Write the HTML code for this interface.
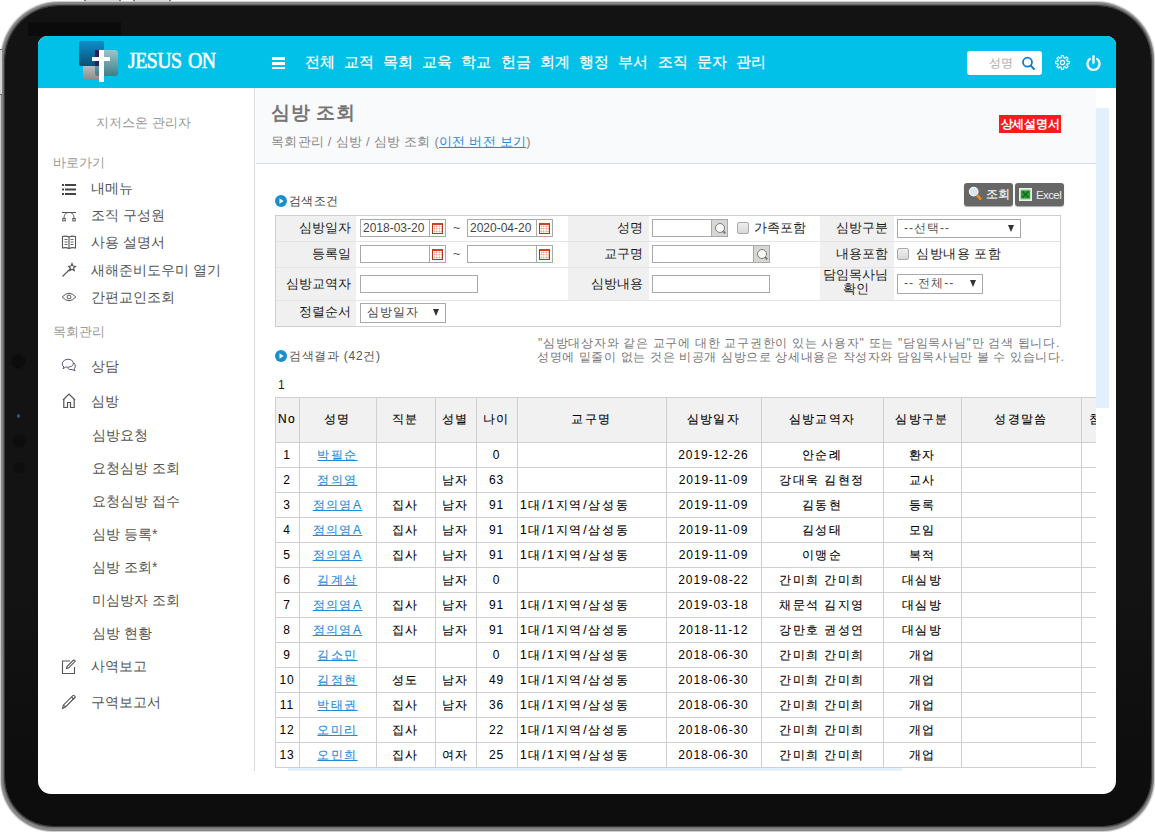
<!DOCTYPE html>
<html><head><meta charset="utf-8">
<style>
*{box-sizing:border-box;margin:0;padding:0}
html,body{width:1155px;height:832px;overflow:hidden;background:#fff;font-family:"Liberation Sans",sans-serif;}
.a{position:absolute;white-space:nowrap}
#frame{position:absolute;left:1px;top:1.5px;width:1153px;height:829px;border-radius:58px 58px 52px 52px;background:#8a8a8a;box-shadow:0 0 1px 0.5px #c8c8c8}
#frame:before{content:"";position:absolute;left:3.5px;top:4px;right:3.5px;bottom:4.5px;border-radius:54px 54px 48px 48px;background:linear-gradient(#131313 0,#131313 70%,#0c0c0c 100%);box-shadow:0 0 2px 1px #1a1a1a}
.btn-top{position:absolute;top:0;height:4px;background:#ddd;border-left:2px solid #777;border-right:2px solid #777}
#sidebtn{position:absolute;left:0;top:49px;width:2px;height:46px;background:#d4d4d4;border-top:1px solid #666;border-bottom:1px solid #666}
#screen{position:absolute;left:38px;top:36px;width:1078px;height:758px;border-radius:9px 9px 13px 13px;background:#fff;overflow:hidden}
#hdr{position:absolute;left:0;top:0;width:1079px;height:52px;background:#02c1e9}
.nav{position:absolute;top:16px;font-size:15px;color:#fff;line-height:20px;-webkit-text-stroke:0.25px #fff}
.sb{position:absolute;font-size:14px;color:#555;line-height:18px;white-space:nowrap}
.sbg{position:absolute;font-size:13px;color:#999;line-height:16px;white-space:nowrap}
.ico{position:absolute}

.lbl{background:#f0f0f0}
.ft{position:absolute;font-size:12.5px;color:#1a1a1a;line-height:16px;white-space:nowrap;text-align:right}
.inp{position:absolute;border:1px solid #a9a9a9;background:#fff}
.inp span{position:absolute;left:2px;top:0px;font-size:12px;line-height:16px;color:#444;white-space:nowrap}
.cal{position:absolute;width:17px;height:18px;border:1px solid #a9a9a9;background:#fff}
.cal:after{content:"";position:absolute;left:2px;top:3px;width:11px;height:11px;box-sizing:border-box;border:1px solid #a83a16;border-top:2px solid #c8471a;background:radial-gradient(circle,#f07040 0.7px,transparent 0.9px) 0 0/2.5px 2.5px #fff}
.srch{position:absolute;width:17px;height:18px;border:1px solid #a9a9a9;background:#d8d8d8}
.srch{background:#d8d6d2}.srch:after{content:"";position:absolute;left:3px;top:3px;width:8px;height:8px;border:1px solid #7a7a7a;border-radius:50%;background:#f8f8f8}.srch:before{content:"";position:absolute;left:10px;top:11px;width:4px;height:1.5px;background:#777;transform:rotate(45deg)}
.chk{position:absolute;width:12px;height:12px;border:1px solid #aaa;border-radius:2px;background:linear-gradient(#eee,#d8d8d8)}
.tri{position:absolute;top:5px;width:0;height:0;border-left:3px solid transparent;border-right:3px solid transparent;border-top:7px solid #333}
/* TCSS */
.hl{left:0;width:900px;height:1px;background:#cfcfcf}
.vl{top:0;width:1px;height:400px;background:#cfcfcf}
.th{height:45px;line-height:45px;text-align:center;font-size:12px;color:#000;letter-spacing:1.4px;-webkit-text-stroke:0.12px #000}
.td{height:25px;line-height:25px;text-align:center;font-size:12px;color:#000;letter-spacing:1.4px;white-space:nowrap;-webkit-text-stroke:0.12px #000}
.num{letter-spacing:0.9px;-webkit-text-stroke:0}
.lk{color:#1f8bdc;-webkit-text-stroke:0.12px #1f8bdc}
/* TCSSEND */
</style></head>
<body>
<div class="btn-top" style="left:84px;width:37px"></div>
<div class="btn-top" style="left:133px;width:38px"></div>
<div id="frame"></div>
<div id="sidebtn"></div>
<div class="a" style="left:28px;top:22px;width:93px;height:14px;background:#0b0b0b"></div>
<div class="a" style="left:12px;top:355px;width:13px;height:13px;border-radius:50%;background:#0c0c0c;box-shadow:0 0 2px #0c0c0c"></div>
<div class="a" style="left:17px;top:414px;width:3px;height:4px;border-radius:50%;background:#3a5570"></div>
<div class="a" style="left:12.5px;top:435px;width:12px;height:12px;border-radius:50%;background:#0d0d0d;box-shadow:0 0 2px #0d0d0d"></div>
<div class="a" style="left:13.5px;top:463px;width:10px;height:10px;border-radius:50%;background:#0e0e0e;box-shadow:0 0 2px #0e0e0e"></div>
<div id="screen">
  <div id="hdr">
    <!-- logo -->
    <div class="a" style="left:41px;top:5px;width:25px;height:25px;background:linear-gradient(#0f8ec9,#0a4f78);border-radius:2px"></div>
    <div class="a" style="left:45px;top:30px;width:16px;height:14px;background:linear-gradient(#bbb,#8a8a8a)"></div>
    <div class="a" style="left:57px;top:14px;width:23px;height:26px;background:linear-gradient(#9cc6c8,#3f7d86);border-radius:3px"></div>
    <div class="a" style="left:57px;top:14px;width:9px;height:16px;background:#2a1f5c"></div>
    <div class="a" style="left:61px;top:14px;width:5px;height:32px;background:#fff"></div>
    <div class="a" style="left:54px;top:21px;width:18px;height:4px;background:#fff"></div>
    <div class="a" style="left:90px;top:12px;font-family:'Liberation Serif',serif;font-size:23px;color:#fff;letter-spacing:-0.6px;word-spacing:2.5px;-webkit-text-stroke:0.6px #fff;line-height:26px;transform:scaleX(0.86);transform-origin:0 0">JESUS ON</div>
    <!-- hamburger -->
    <div class="a" style="left:234px;top:21px;width:13px;height:2.5px;background:#fff"></div>
    <div class="a" style="left:234px;top:26px;width:13px;height:2.5px;background:#fff"></div>
    <div class="a" style="left:234px;top:30.5px;width:13px;height:2.5px;background:#fff"></div>
    <span class="nav" style="left:267px">전체</span>
    <span class="nav" style="left:306px">교적</span>
    <span class="nav" style="left:345px">목회</span>
    <span class="nav" style="left:384px">교육</span>
    <span class="nav" style="left:423px">학교</span>
    <span class="nav" style="left:463px">헌금</span>
    <span class="nav" style="left:502px">회계</span>
    <span class="nav" style="left:541px">행정</span>
    <span class="nav" style="left:580px">부서</span>
    <span class="nav" style="left:620px">조직</span>
    <span class="nav" style="left:659px">문자</span>
    <span class="nav" style="left:698px">관리</span>
    <!-- search -->
    <div class="a" style="left:929px;top:15px;width:75px;height:24px;background:#fff;border-radius:3px"></div>
    <span class="a" style="left:951px;top:19px;font-size:12px;color:#aaa;line-height:16px">성명</span>
    <svg class="a" style="left:983px;top:20px" width="15" height="15" viewBox="0 0 15 15"><circle cx="6.5" cy="6.2" r="4.5" fill="none" stroke="#0f7bd6" stroke-width="1.8"/><path d="M9.8 9.6 L13 13" stroke="#0f7bd6" stroke-width="2" stroke-linecap="round"/></svg>
    <!-- gear -->
    <svg class="a" style="left:1016px;top:18px" width="17" height="17" viewBox="0 0 17 17"><g fill="none" stroke="#fff" stroke-width="1.15" stroke-linejoin="round"><path d="M7.31 3.75 L7.42 1.68 L9.58 1.68 L9.69 3.75 L11.02 4.30 L12.56 2.92 L14.08 4.44 L12.70 5.98 L13.25 7.31 L15.32 7.42 L15.32 9.58 L13.25 9.69 L12.70 11.02 L14.08 12.56 L12.56 14.08 L11.02 12.70 L9.69 13.25 L9.58 15.32 L7.42 15.32 L7.31 13.25 L5.98 12.70 L4.44 14.08 L2.92 12.56 L4.30 11.02 L3.75 9.69 L1.68 9.58 L1.68 7.42 L3.75 7.31 L4.30 5.98 L2.92 4.44 L4.44 2.92 L5.98 4.30Z"/><circle cx="8.5" cy="8.5" r="2.1"/></g></svg>
    <!-- power -->
    <svg class="a" style="left:1047px;top:18px" width="17" height="18" viewBox="0 0 17 18"><path d="M4.9 4.9 A6.1 6.1 0 1 0 12.1 4.9" fill="none" stroke="#fff" stroke-width="2.3" stroke-linecap="round"/><path d="M8.5 2.2 V8.8" stroke="#fff" stroke-width="2.3" stroke-linecap="round"/></svg>
  </div>
  <!-- sidebar -->
  <div class="a" style="left:216px;top:52px;width:1px;height:683px;background:#dadada"></div>
  <span class="sbg" style="left:58px;top:79px">지저스온 관리자</span>
  <span class="sbg" style="left:15px;top:119px">바로가기</span>
  <span class="sb" style="left:53px;top:143px">내메뉴</span>
  <span class="sb" style="left:53px;top:170px">조직 구성원</span>
  <span class="sb" style="left:53px;top:197px">사용 설명서</span>
  <span class="sb" style="left:53px;top:225px">새해준비도우미 열기</span>
  <span class="sb" style="left:53px;top:252px">간편교인조회</span>
  <span class="sbg" style="left:15px;top:288px">목회관리</span>
  <span class="sb" style="left:53px;top:321px">상담</span>
  <span class="sb" style="left:53px;top:356px">심방</span>
  <span class="sb" style="left:54px;top:390px">심방요청</span>
  <span class="sb" style="left:54px;top:423px">요청심방 조회</span>
  <span class="sb" style="left:54px;top:456px">요청심방 접수</span>
  <span class="sb" style="left:54px;top:489px">심방 등록*</span>
  <span class="sb" style="left:54px;top:522px">심방 조회*</span>
  <span class="sb" style="left:54px;top:555px">미심방자 조회</span>
  <span class="sb" style="left:54px;top:588px">심방 현황</span>
  <span class="sb" style="left:53px;top:621px">사역보고</span>
  <span class="sb" style="left:53px;top:657px">구역보고서</span>


  <!-- sidebar icons -->
  <svg class="a" style="left:24px;top:148px" width="14" height="12" viewBox="0 0 14 12"><g fill="#444"><rect x="0" y="0" width="2" height="2"/><rect x="3" y="0" width="11" height="2"/><rect x="0" y="4.5" width="2" height="2"/><rect x="3" y="4.5" width="11" height="2"/><rect x="0" y="9" width="2" height="2"/><rect x="3" y="9" width="11" height="2"/></g></svg>
  <svg class="a" style="left:23px;top:174px" width="16" height="12" viewBox="0 0 16 12"><g fill="none" stroke="#555" stroke-width="1"><path d="M3 8.5 C3 4 5 2.5 8 2.5 C11 2.5 13 4 13 8.5"/><path d="M1 2.5 H15"/><rect x="1.8" y="8.5" width="2.4" height="2.4"/><rect x="11.8" y="8.5" width="2.4" height="2.4"/></g></svg>
  <svg class="a" style="left:23px;top:199px" width="16" height="15" viewBox="0 0 16 15"><g fill="none" stroke="#555" stroke-width="1.1"><path d="M1.5 1.5 Q5 0.5 8 2 Q11 0.5 14.5 1.5 V13 Q11 12 8 13.5 Q5 12 1.5 13z"/><path d="M8 2 V13.5"/><path d="M3.5 4.5H6.5M3.5 7H6.5M3.5 9.5H6.5M9.5 4.5H12.5M9.5 7H12.5M9.5 9.5H12.5" stroke-width="0.9"/></g></svg>
  <svg class="a" style="left:23px;top:226px" width="16" height="16" viewBox="0 0 16 16"><g fill="none" stroke="#555" stroke-width="1.1"><path d="M1.5 14.5 L9 7"/><path d="M11 1.5 L12 4 L14.5 4.3 L12.6 6 L13.2 8.5 L11 7.2 L8.8 8.5 L9.4 6 L7.5 4.3 L10 4z"/></g></svg>
  <svg class="a" style="left:23px;top:255px" width="16" height="12" viewBox="0 0 16 12"><g fill="none" stroke="#555" stroke-width="1"><path d="M1.2 6 Q8 -1.5 14.8 6 Q8 13.5 1.2 6z"/><circle cx="8" cy="6" r="1.9"/></g></svg>
  <svg class="a" style="left:23px;top:322px" width="16" height="15" viewBox="0 0 16 15"><g fill="none" stroke="#5a5a78" stroke-width="1"><path d="M2.8 9 Q0.5 7 1.5 4.5 Q3 1.2 7 1.2 Q11.5 1.2 12.3 4.5 Q12.8 8 8.5 9 Q6 9.5 4.5 9 L2 10.8 z"/><path d="M12.8 4.8 Q14.8 6.5 14.2 9 Q13.8 10 13.2 10.5 L14 12.8 L11 11.6 Q8 12.2 6.5 10"/></g></svg>
  <svg class="a" style="left:24px;top:357px" width="14" height="16" viewBox="0 0 14 16"><g fill="none" stroke="#555" stroke-width="1.2"><path d="M1 7 L7 1 L13 7"/><path d="M1.8 6.3 V14.5 H5.5 V9.5 H8.5 V14.5 H12.2 V6.3"/></g></svg>
  <svg class="a" style="left:23px;top:623px" width="16" height="16" viewBox="0 0 16 16"><g fill="none" stroke="#555" stroke-width="1.1"><path d="M9 2 H1.5 V14.5 H13.5 V8"/><path d="M5.5 9.5 L6 7.5 L12.5 1 Q14 0.8 14.3 2.2 L7.8 8.8z"/></g></svg>
  <svg class="a" style="left:23px;top:658px" width="16" height="16" viewBox="0 0 16 16"><g fill="none" stroke="#555" stroke-width="1.1"><path d="M1.5 14.5 L2.3 11.2 L11.8 1.7 Q13.8 1 14.3 3 L4.8 12.7z"/><path d="M2.3 11.2 L4.8 12.7"/><path d="M10.5 3 L13 5.5"/></g></svg>
  <!-- title area -->
  <div class="a" style="left:218px;top:53px;width:840px;height:75px;background:#f9fafc;border-bottom:1px solid #cfdce1"></div>
  <div class="a" style="left:1058px;top:72px;width:13px;height:300px;background:#e1f0fb"></div>
  <span class="a" style="left:233px;top:65px;font-size:19px;font-weight:bold;color:#777;line-height:24px;letter-spacing:0.7px">심방 조회</span>
  <span class="a" style="left:233px;top:98px;font-size:13px;color:#888;line-height:16px;letter-spacing:0.25px">목회관리 / 심방 / 심방 조회 (<u style="color:#2a8ad6">이전 버전 보기</u>)</span>
  <div class="a" style="left:961px;top:79px;width:62px;height:18px;background:#f51b1f;color:#fff;font-size:12px;font-weight:bold;line-height:18px;text-align:center;letter-spacing:-0.3px">상세설명서</div>
  <!-- buttons -->
  <div class="a" style="left:926px;top:147px;width:49px;height:23px;background:#676767;border-radius:3px;box-shadow:0 1px 1px #aaa"></div>
  <div class="a" style="left:977px;top:147px;width:49px;height:23px;background:#676767;border-radius:3px;box-shadow:0 1px 1px #aaa"></div>
  <svg class="a" style="left:930px;top:150px" width="16" height="16" viewBox="0 0 16 16"><circle cx="5.7" cy="5.6" r="4.3" fill="#d4e6f2" stroke="#f2f2f2" stroke-width="1.2"/><path d="M9.8 10 L12.2 12.6" stroke="#f08a10" stroke-width="2.8" stroke-linecap="round"/></svg>
  <span class="a" style="left:948px;top:151px;font-size:11.5px;color:#f4f4f4;line-height:15px;letter-spacing:-0.3px;-webkit-text-stroke:0.2px #f4f4f4">조회</span>
  <svg class="a" style="left:981px;top:152px" width="13" height="13" viewBox="0 0 13 13"><rect x="0.7" y="0.7" width="11.6" height="11.6" fill="#9fd49a" stroke="#f0f0f0" stroke-width="1.4"/><rect x="2" y="2.5" width="9" height="8" fill="#2f9a3a"/><path d="M3.5 3.5 L9.5 9.5 M9.5 3.5 L3.5 9.5" stroke="#116b1e" stroke-width="1.6"/></svg>
  <span class="a" style="left:998px;top:152px;font-size:11.5px;color:#eee;line-height:15px;letter-spacing:-0.6px">Excel</span>
  <!-- search condition -->
  <svg class="a" style="left:237px;top:159px" width="12" height="12" viewBox="0 0 12 12"><circle cx="6" cy="6" r="6" fill="#1a8fce"/><path d="M4.5 3.3 L8.6 6 L4.5 8.7z" fill="#fff"/></svg>
  <span class="a" style="left:251px;top:157px;font-size:12px;color:#444;line-height:16px;letter-spacing:0.3px">검색조건</span>

  <!-- form -->
  <div class="a" style="left:237px;top:179px;width:786px;height:112px;border:1px solid #cfcfcf;background:#fff"></div>
  <div class="a lbl" style="left:238px;top:180px;width:80px;height:110px"></div>
  <div class="a lbl" style="left:530px;top:180px;width:81px;height:84px"></div>
  <div class="a lbl" style="left:782px;top:180px;width:74px;height:84px"></div>
  <div class="a" style="left:238px;top:205px;width:784px;height:1px;background:#e4e4e4"></div>
  <div class="a" style="left:238px;top:231px;width:784px;height:1px;background:#e4e4e4"></div>
  <div class="a" style="left:238px;top:264px;width:784px;height:1px;background:#e4e4e4"></div>
  <span class="ft" style="right:765px;top:184px">심방일자</span>
  <span class="ft" style="right:765px;top:210px">등록일</span>
  <span class="ft" style="right:765px;top:240px">심방교역자</span>
  <span class="ft" style="right:765px;top:268px">정렬순서</span>
  <span class="ft" style="right:473px;top:184px">성명</span>
  <span class="ft" style="right:473px;top:210px">교구명</span>
  <span class="ft" style="right:473px;top:240px">심방내용</span>
  <span class="ft" style="right:228px;top:184px">심방구분</span>
  <span class="ft" style="right:228px;top:210px">내용포함</span>
  <span class="ft" style="right:228px;top:232px;text-align:center;line-height:14px">담임목사님<br>확인</span>
  <div class="inp" style="left:322px;top:183px;width:86px;height:18px"><span>2018-03-20</span></div>
  <div class="inp" style="left:429px;top:183px;width:86px;height:18px"><span>2020-04-20</span></div>
  <div class="inp" style="left:322px;top:209px;width:86px;height:18px"></div>
  <div class="inp" style="left:429px;top:209px;width:86px;height:18px"></div>
  <div class="cal" style="left:391px;top:183px"></div>
  <div class="cal" style="left:498px;top:183px"></div>
  <div class="cal" style="left:391px;top:209px"></div>
  <div class="cal" style="left:498px;top:209px"></div>
  <span class="ft" style="left:415px;top:184px;color:#555">~</span>
  <span class="ft" style="left:415px;top:210px;color:#555">~</span>
  <div class="inp" style="left:614px;top:183px;width:76px;height:18px"></div>
  <div class="srch" style="left:673px;top:183px"></div>
  <div class="chk" style="left:699px;top:186px"></div>
  <span class="ft" style="left:716px;top:184px">가족포함</span>
  <div class="inp" style="left:859px;top:183px;width:124px;height:19px"><span style="color:#555;left:6px;letter-spacing:1px">--선택--</span><b class="tri" style="left:110px"></b></div>
  <div class="inp" style="left:614px;top:209px;width:118px;height:18px"></div>
  <div class="srch" style="left:715px;top:209px"></div>
  <div class="chk" style="left:859px;top:212px"></div>
  <span class="ft" style="left:878px;top:210px;letter-spacing:0.6px">심방내용 포함</span>
  <div class="inp" style="left:322px;top:239px;width:118px;height:18px"></div>
  <div class="inp" style="left:614px;top:239px;width:118px;height:18px"></div>
  <div class="inp" style="left:859px;top:238px;width:86px;height:20px"><span style="color:#555;left:6px;letter-spacing:1px">-- 전체--</span><b class="tri" style="left:72px"></b></div>
  <div class="inp" style="left:322px;top:267px;width:86px;height:20px"><span style="color:#444;left:6px;letter-spacing:1px">심방일자</span><b class="tri" style="left:72px"></b></div>

  <!-- results -->
  <svg class="a" style="left:237px;top:314px" width="12" height="12" viewBox="0 0 12 12"><circle cx="6" cy="6" r="6" fill="#1a8fce"/><path d="M4.5 3.3 L8.6 6 L4.5 8.7z" fill="#fff"/></svg>
  <span class="a" style="left:251px;top:312px;font-size:12px;color:#555;line-height:16px;letter-spacing:0.7px">검색결과 (42건)</span>
  <span class="a" style="left:500px;top:300px;font-size:12px;color:#777;line-height:14px;letter-spacing:0.71px">"심방대상자와 같은 교구에 대한 교구권한이 있는 사용자" 또는 "담임목사님"만 검색 됩니다.</span>
  <span class="a" style="left:499px;top:314px;font-size:12px;color:#777;line-height:14px;letter-spacing:0.63px">성명에 밑줄이 없는 것은 비공개 심방으로 상세내용은 작성자와 담임목사님만 볼 수 있습니다.</span>
  <span class="a" style="left:240px;top:341px;font-size:12px;color:#222;line-height:16px">1</span>
<!-- TABLE START -->
<div class="a" style="left:237px;top:361px;width:821px;height:371px;overflow:hidden">
<div class="a" style="left:0;top:0;width:861px;height:45px;background:#f1f1f1"></div>
<div class="a hl" style="top:0px"></div>
<div class="a hl" style="top:45px"></div>
<div class="a hl" style="top:70px"></div>
<div class="a hl" style="top:95px"></div>
<div class="a hl" style="top:120px"></div>
<div class="a hl" style="top:145px"></div>
<div class="a hl" style="top:170px"></div>
<div class="a hl" style="top:195px"></div>
<div class="a hl" style="top:220px"></div>
<div class="a hl" style="top:245px"></div>
<div class="a hl" style="top:270px"></div>
<div class="a hl" style="top:295px"></div>
<div class="a hl" style="top:320px"></div>
<div class="a hl" style="top:345px"></div>
<div class="a hl" style="top:370px"></div>
<div class="a vl" style="left:0px"></div>
<div class="a vl" style="left:24px"></div>
<div class="a vl" style="left:101px"></div>
<div class="a vl" style="left:160px"></div>
<div class="a vl" style="left:201px"></div>
<div class="a vl" style="left:242px"></div>
<div class="a vl" style="left:391px"></div>
<div class="a vl" style="left:486px"></div>
<div class="a vl" style="left:608px"></div>
<div class="a vl" style="left:686px"></div>
<div class="a vl" style="left:806px"></div>
<div class="a th" style="left:0px;width:24px;top:0px">No</div>
<div class="a th" style="left:24px;width:77px;top:0px">성명</div>
<div class="a th" style="left:101px;width:59px;top:0px">직분</div>
<div class="a th" style="left:160px;width:41px;top:0px">성별</div>
<div class="a th" style="left:201px;width:41px;top:0px">나이</div>
<div class="a th" style="left:242px;width:149px;top:0px">교구명</div>
<div class="a th" style="left:391px;width:95px;top:0px">심방일자</div>
<div class="a th" style="left:486px;width:122px;top:0px">심방교역자</div>
<div class="a th" style="left:608px;width:78px;top:0px">심방구분</div>
<div class="a th" style="left:686px;width:120px;top:0px">성경말씀</div>
<div class="a th" style="left:806px;width:42px;top:0px">첨부</div>
<div class="a td num" style="left:0px;width:24px;top:46px">1</div>
<div class="a td lk" style="left:24px;width:77px;top:46px"><u>박필순</u></div>
<div class="a td num" style="left:201px;width:41px;top:46px">0</div>
<div class="a td num" style="left:391px;width:95px;top:46px">2019-12-26</div>
<div class="a td" style="left:486px;width:122px;top:46px">안순례</div>
<div class="a td" style="left:608px;width:78px;top:46px">환자</div>
<div class="a td num" style="left:0px;width:24px;top:71px">2</div>
<div class="a td lk" style="left:24px;width:77px;top:71px"><u>정의영</u></div>
<div class="a td" style="left:160px;width:41px;top:71px">남자</div>
<div class="a td num" style="left:201px;width:41px;top:71px">63</div>
<div class="a td num" style="left:391px;width:95px;top:71px">2019-11-09</div>
<div class="a td" style="left:486px;width:122px;top:71px">강대욱 김현정</div>
<div class="a td" style="left:608px;width:78px;top:71px">교사</div>
<div class="a td num" style="left:0px;width:24px;top:96px">3</div>
<div class="a td lk" style="left:24px;width:77px;top:96px"><u>정의영A</u></div>
<div class="a td" style="left:101px;width:59px;top:96px">집사</div>
<div class="a td" style="left:160px;width:41px;top:96px">남자</div>
<div class="a td num" style="left:201px;width:41px;top:96px">91</div>
<div class="a td" style="left:245px;top:96px;text-align:left;letter-spacing:1.75px">1대/1지역/삼성동</div>
<div class="a td num" style="left:391px;width:95px;top:96px">2019-11-09</div>
<div class="a td" style="left:486px;width:122px;top:96px">김동현</div>
<div class="a td" style="left:608px;width:78px;top:96px">등록</div>
<div class="a td num" style="left:0px;width:24px;top:121px">4</div>
<div class="a td lk" style="left:24px;width:77px;top:121px"><u>정의영A</u></div>
<div class="a td" style="left:101px;width:59px;top:121px">집사</div>
<div class="a td" style="left:160px;width:41px;top:121px">남자</div>
<div class="a td num" style="left:201px;width:41px;top:121px">91</div>
<div class="a td" style="left:245px;top:121px;text-align:left;letter-spacing:1.75px">1대/1지역/삼성동</div>
<div class="a td num" style="left:391px;width:95px;top:121px">2019-11-09</div>
<div class="a td" style="left:486px;width:122px;top:121px">김성태</div>
<div class="a td" style="left:608px;width:78px;top:121px">모임</div>
<div class="a td num" style="left:0px;width:24px;top:146px">5</div>
<div class="a td lk" style="left:24px;width:77px;top:146px"><u>정의영A</u></div>
<div class="a td" style="left:101px;width:59px;top:146px">집사</div>
<div class="a td" style="left:160px;width:41px;top:146px">남자</div>
<div class="a td num" style="left:201px;width:41px;top:146px">91</div>
<div class="a td" style="left:245px;top:146px;text-align:left;letter-spacing:1.75px">1대/1지역/삼성동</div>
<div class="a td num" style="left:391px;width:95px;top:146px">2019-11-09</div>
<div class="a td" style="left:486px;width:122px;top:146px">이맹순</div>
<div class="a td" style="left:608px;width:78px;top:146px">복적</div>
<div class="a td num" style="left:0px;width:24px;top:171px">6</div>
<div class="a td lk" style="left:24px;width:77px;top:171px"><u>김계삼</u></div>
<div class="a td" style="left:160px;width:41px;top:171px">남자</div>
<div class="a td num" style="left:201px;width:41px;top:171px">0</div>
<div class="a td num" style="left:391px;width:95px;top:171px">2019-08-22</div>
<div class="a td" style="left:486px;width:122px;top:171px">간미희 간미희</div>
<div class="a td" style="left:608px;width:78px;top:171px">대심방</div>
<div class="a td num" style="left:0px;width:24px;top:196px">7</div>
<div class="a td lk" style="left:24px;width:77px;top:196px"><u>정의영A</u></div>
<div class="a td" style="left:101px;width:59px;top:196px">집사</div>
<div class="a td" style="left:160px;width:41px;top:196px">남자</div>
<div class="a td num" style="left:201px;width:41px;top:196px">91</div>
<div class="a td" style="left:245px;top:196px;text-align:left;letter-spacing:1.75px">1대/1지역/삼성동</div>
<div class="a td num" style="left:391px;width:95px;top:196px">2019-03-18</div>
<div class="a td" style="left:486px;width:122px;top:196px">채문석 김지영</div>
<div class="a td" style="left:608px;width:78px;top:196px">대심방</div>
<div class="a td num" style="left:0px;width:24px;top:221px">8</div>
<div class="a td lk" style="left:24px;width:77px;top:221px"><u>정의영A</u></div>
<div class="a td" style="left:101px;width:59px;top:221px">집사</div>
<div class="a td" style="left:160px;width:41px;top:221px">남자</div>
<div class="a td num" style="left:201px;width:41px;top:221px">91</div>
<div class="a td" style="left:245px;top:221px;text-align:left;letter-spacing:1.75px">1대/1지역/삼성동</div>
<div class="a td num" style="left:391px;width:95px;top:221px">2018-11-12</div>
<div class="a td" style="left:486px;width:122px;top:221px">강만호 권성연</div>
<div class="a td" style="left:608px;width:78px;top:221px">대심방</div>
<div class="a td num" style="left:0px;width:24px;top:246px">9</div>
<div class="a td lk" style="left:24px;width:77px;top:246px"><u>김소민</u></div>
<div class="a td num" style="left:201px;width:41px;top:246px">0</div>
<div class="a td" style="left:245px;top:246px;text-align:left;letter-spacing:1.75px">1대/1지역/삼성동</div>
<div class="a td num" style="left:391px;width:95px;top:246px">2018-06-30</div>
<div class="a td" style="left:486px;width:122px;top:246px">간미희 간미희</div>
<div class="a td" style="left:608px;width:78px;top:246px">개업</div>
<div class="a td num" style="left:0px;width:24px;top:271px">10</div>
<div class="a td lk" style="left:24px;width:77px;top:271px"><u>김정현</u></div>
<div class="a td" style="left:101px;width:59px;top:271px">성도</div>
<div class="a td" style="left:160px;width:41px;top:271px">남자</div>
<div class="a td num" style="left:201px;width:41px;top:271px">49</div>
<div class="a td" style="left:245px;top:271px;text-align:left;letter-spacing:1.75px">1대/1지역/삼성동</div>
<div class="a td num" style="left:391px;width:95px;top:271px">2018-06-30</div>
<div class="a td" style="left:486px;width:122px;top:271px">간미희 간미희</div>
<div class="a td" style="left:608px;width:78px;top:271px">개업</div>
<div class="a td num" style="left:0px;width:24px;top:296px">11</div>
<div class="a td lk" style="left:24px;width:77px;top:296px"><u>박태권</u></div>
<div class="a td" style="left:101px;width:59px;top:296px">집사</div>
<div class="a td" style="left:160px;width:41px;top:296px">남자</div>
<div class="a td num" style="left:201px;width:41px;top:296px">36</div>
<div class="a td" style="left:245px;top:296px;text-align:left;letter-spacing:1.75px">1대/1지역/삼성동</div>
<div class="a td num" style="left:391px;width:95px;top:296px">2018-06-30</div>
<div class="a td" style="left:486px;width:122px;top:296px">간미희 간미희</div>
<div class="a td" style="left:608px;width:78px;top:296px">개업</div>
<div class="a td num" style="left:0px;width:24px;top:321px">12</div>
<div class="a td lk" style="left:24px;width:77px;top:321px"><u>오미리</u></div>
<div class="a td" style="left:101px;width:59px;top:321px">집사</div>
<div class="a td num" style="left:201px;width:41px;top:321px">22</div>
<div class="a td" style="left:245px;top:321px;text-align:left;letter-spacing:1.75px">1대/1지역/삼성동</div>
<div class="a td num" style="left:391px;width:95px;top:321px">2018-06-30</div>
<div class="a td" style="left:486px;width:122px;top:321px">간미희 간미희</div>
<div class="a td" style="left:608px;width:78px;top:321px">개업</div>
<div class="a td num" style="left:0px;width:24px;top:346px">13</div>
<div class="a td lk" style="left:24px;width:77px;top:346px"><u>오민희</u></div>
<div class="a td" style="left:101px;width:59px;top:346px">집사</div>
<div class="a td" style="left:160px;width:41px;top:346px">여자</div>
<div class="a td num" style="left:201px;width:41px;top:346px">25</div>
<div class="a td" style="left:245px;top:346px;text-align:left;letter-spacing:1.75px">1대/1지역/삼성동</div>
<div class="a td num" style="left:391px;width:95px;top:346px">2018-06-30</div>
<div class="a td" style="left:486px;width:122px;top:346px">간미희 간미희</div>
<div class="a td" style="left:608px;width:78px;top:346px">개업</div>
</div>
<div class="a" style="left:250px;top:732px;width:614px;height:3px;background:#e2f1fc"></div>
<!-- TABLE END -->
</div>
<script>
(function(){
  try{
  var t=document.createElement('span');
  t.style.cssText='position:absolute;left:0;top:0;visibility:hidden;font-size:100px;white-space:nowrap;letter-spacing:0';
  t.textContent='\uAC00\uB098\uB2E4\uB77C';
  document.body.appendChild(t);
  var w=t.getBoundingClientRect().width;
  document.body.removeChild(t);
  if(!(w>0) || w>=385) return;
  var extra=1-w/400;
  var walker=document.createTreeWalker(document.body,NodeFilter.SHOW_TEXT,null);
  var nodes=[];while(walker.nextNode())nodes.push(walker.currentNode);
  nodes.forEach(function(n){
    if(!/[\uAC00-\uD7A3]/.test(n.nodeValue))return;
    var p=n.parentNode;var cs=getComputedStyle(p);
    var fs=parseFloat(cs.fontSize);var ls=cs.letterSpacing==='normal'?0:(parseFloat(cs.letterSpacing)||0);
    var frag=document.createDocumentFragment();
    n.nodeValue.split(/([\uAC00-\uD7A3]+)/).forEach(function(s,i){
      if(!s)return;
      if(i%2===1){var sp=document.createElement('span');sp.style.letterSpacing=(ls+extra*fs)+'px';sp.textContent=s;frag.appendChild(sp);}
      else frag.appendChild(document.createTextNode(s));
    });
    p.replaceChild(frag,n);
  });
  }catch(e){}
})();
</script>
</body></html>
